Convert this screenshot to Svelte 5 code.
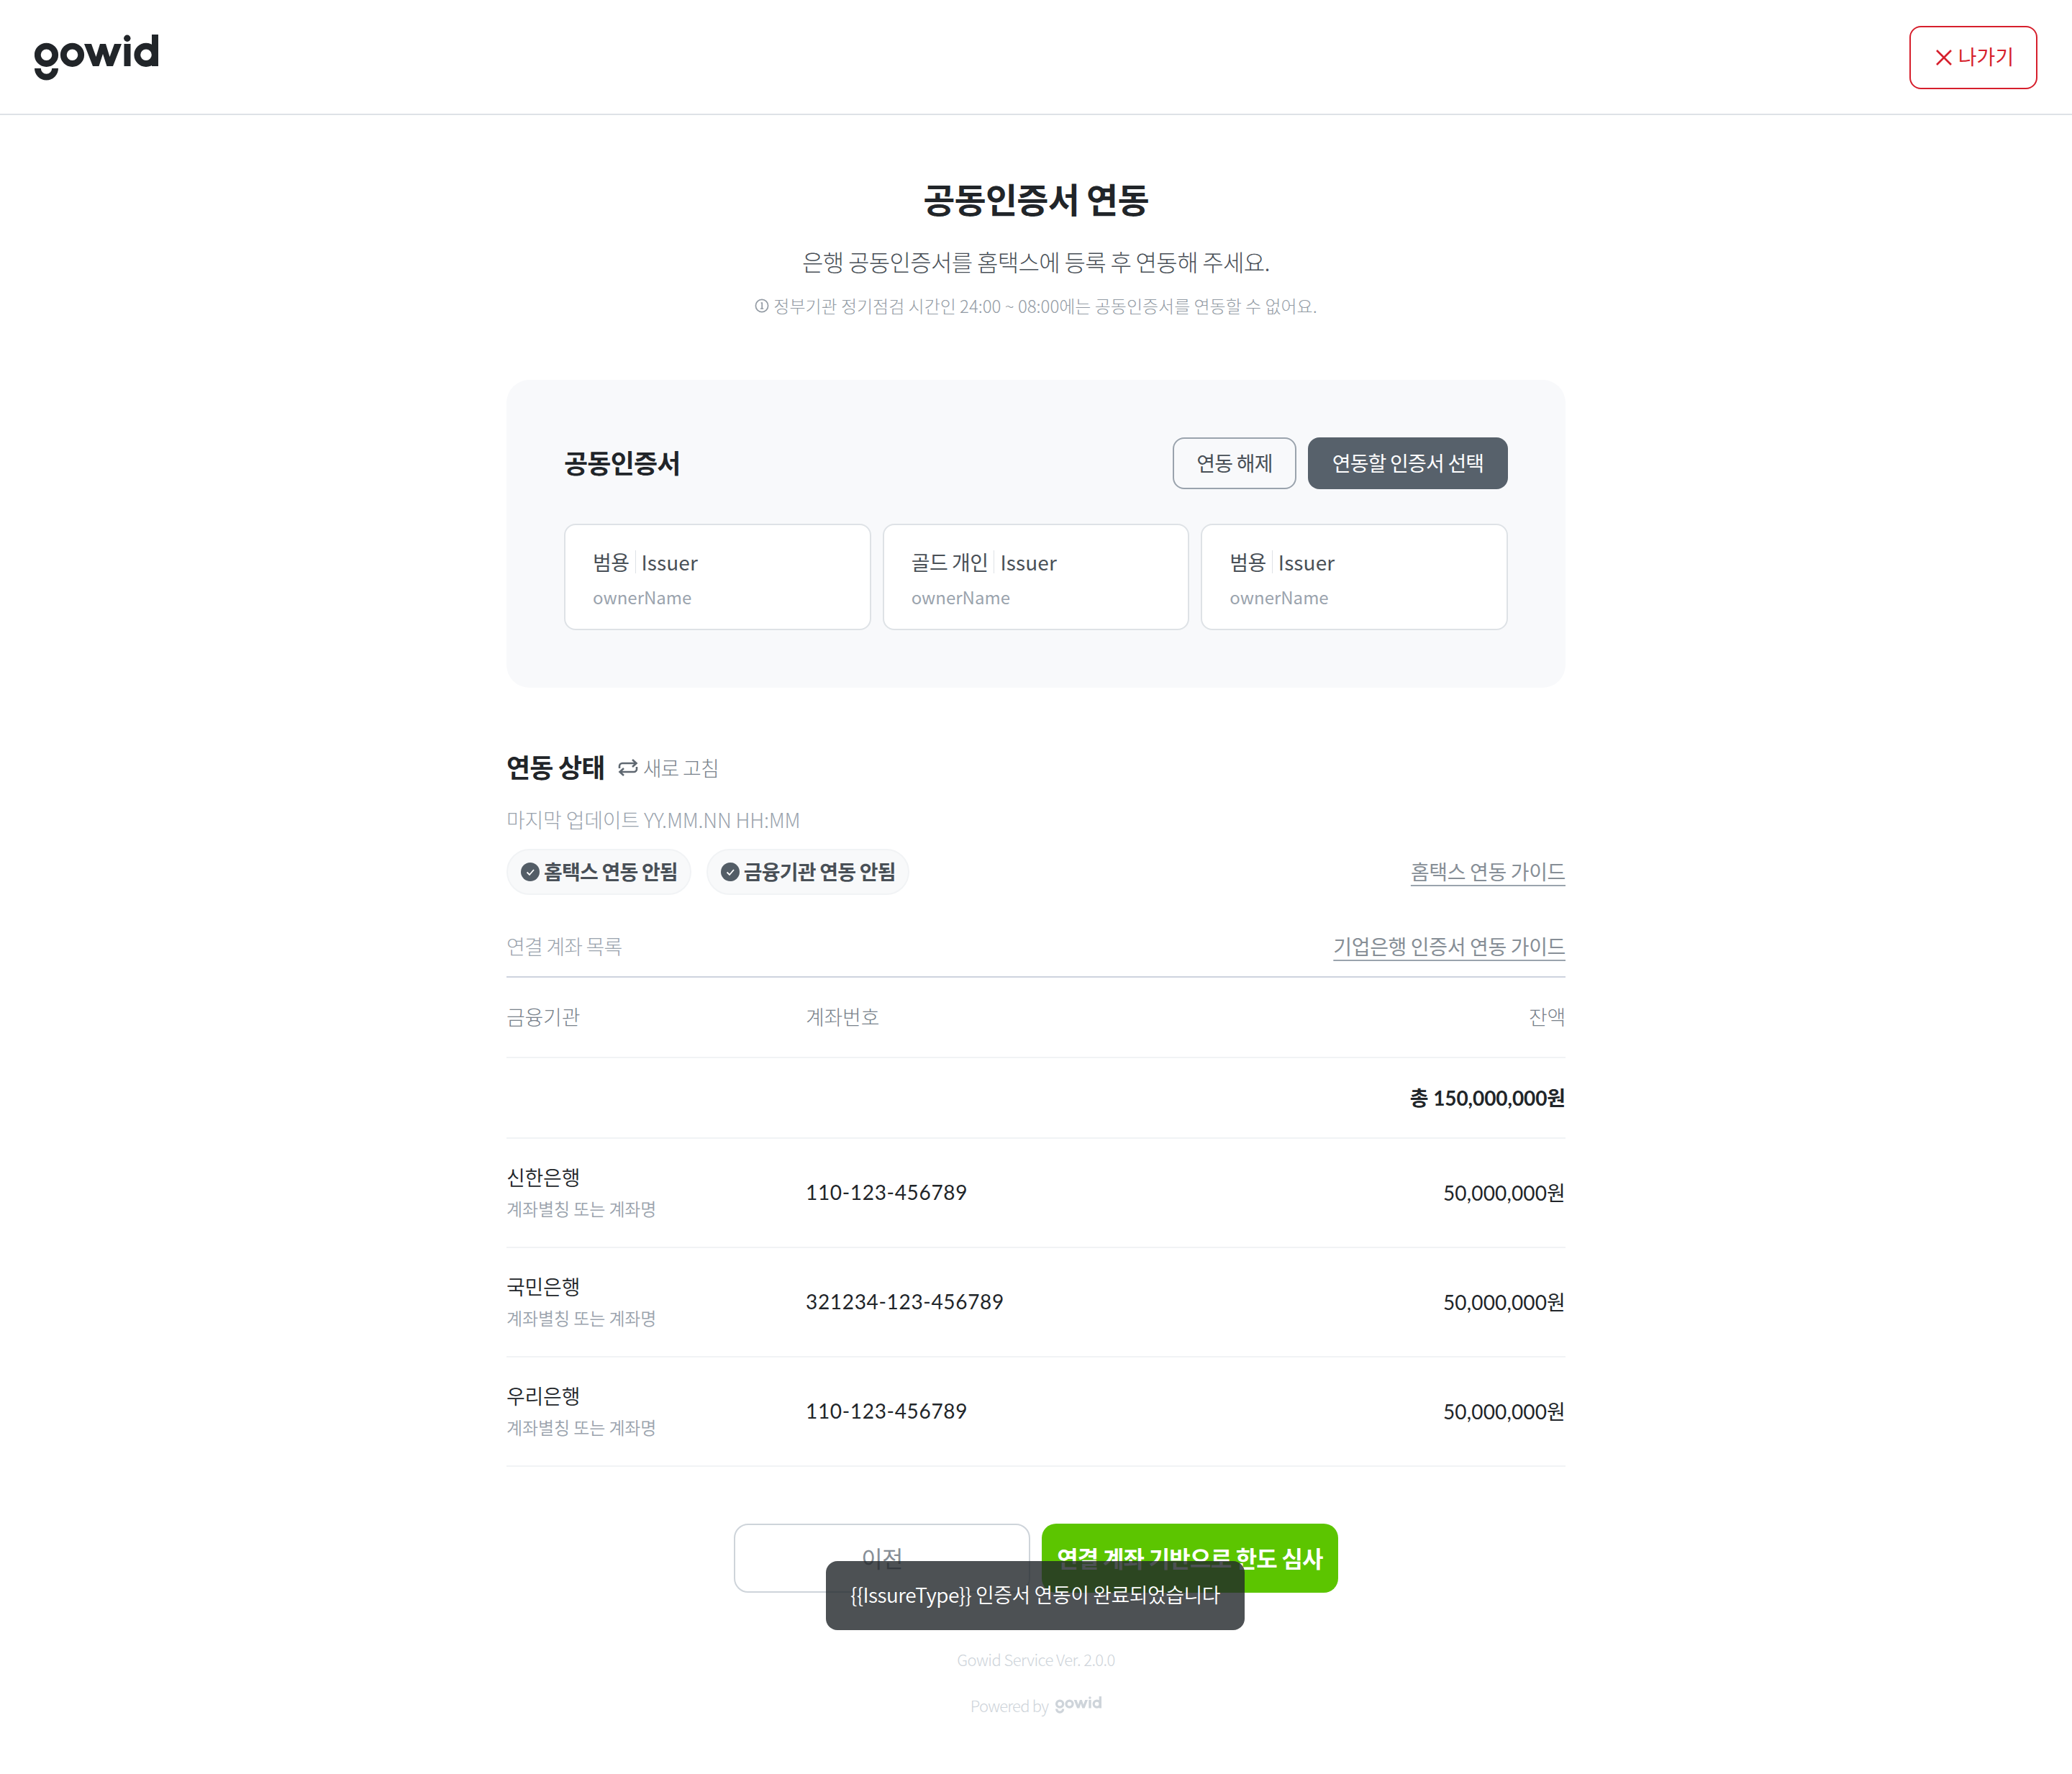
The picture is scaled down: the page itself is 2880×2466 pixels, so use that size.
<script>
  const certs = [
    { type: '범용', issuer: 'Issuer', owner: 'ownerName' },
    { type: '골드 개인', issuer: 'Issuer', owner: 'ownerName' },
    { type: '범용', issuer: 'Issuer', owner: 'ownerName' }
  ];
  const accounts = [
    { bank: '신한은행', alias: '계좌별칭 또는 계좌명', no: '110-123-456789', amount: '50,000,000원' },
    { bank: '국민은행', alias: '계좌별칭 또는 계좌명', no: '321234-123-456789', amount: '50,000,000원' },
    { bank: '우리은행', alias: '계좌별칭 또는 계좌명', no: '110-123-456789', amount: '50,000,000원' }
  ];
  const chips = ['홈택스 연동 안됨', '금융기관 연동 안됨'];
</script>

{#snippet logo(cls)}
  <svg class={cls} viewBox="0 0 172 64" aria-label="gowid">
    <g fill="none" stroke="currentColor" stroke-width="8.8">
      <circle cx="16.5" cy="28.3" r="12.2" />
      <circle cx="52.5" cy="28.3" r="12.2" />
      <circle cx="155" cy="28.3" r="12.2" />
      <path d="M4.4 47 a12.1 12.1 0 0 0 24.2 0" />
    </g>
    <polygon fill="currentColor" points="69,13 79,13 85.5,31 91,13 99,13 104.5,31 111,13 121,13 109,44 100.5,44 95,27 89.5,44 81,44" />
    <rect x="124.5" y="13" width="9" height="31" fill="currentColor" />
    <circle cx="128.8" cy="5.3" r="4.7" fill="currentColor" />
    <rect x="163" y="0" width="9" height="44" fill="currentColor" />
  </svg>
{/snippet}

<div class="page">
  <header class="topbar">
    {@render logo('logo')}
    <button class="exit">
      <svg viewBox="0 0 24 24" width="24" height="24" fill="none" stroke="currentColor" stroke-width="2.6">
        <path d="M2 2 L22 22 M22 2 L2 22" />
      </svg>
      <span>나가기</span>
    </button>
  </header>

  <main class="main">
    <h1>공동인증서 연동</h1>
    <p class="sub">은행 공동인증서를 홈택스에 등록 후 연동해 주세요.</p>
    <p class="note">
      <svg viewBox="0 0 20 20" width="20" height="20" fill="none" stroke="currentColor" stroke-width="1.7">
        <circle cx="10" cy="10" r="8.6" />
        <path d="M8.6 6h1.6v8 M8 14h4.2" />
      </svg>
      정부기관 정기점검 시간인 24:00 ~ 08:00에는 공동인증서를 연동할 수 없어요.
    </p>

    <section class="panel">
      <div class="panel-head">
        <h2>공동인증서</h2>
        <div class="panel-btns">
          <button class="btn-line">연동 해제</button>
          <button class="btn-dark">연동할 인증서 선택</button>
        </div>
      </div>
      <div class="certs">
        {#each certs as c}
          <div class="cert">
            <div class="cert-top"><span class="cert-type">{c.type}</span><span class="cert-issuer">{c.issuer}</span></div>
            <div class="cert-owner">{c.owner}</div>
          </div>
        {/each}
      </div>
    </section>

    <div class="status-title">
      <h2>연동 상태</h2>
      <span class="refresh">
        <svg viewBox="0 0 28 24" width="28" height="24" fill="none" stroke="#5f6871" stroke-width="2.6">
          <path d="M2 13 V10 a4 4 0 0 1 4-4 H25 M20 1 L25.5 6 L20 11" />
          <path d="M26 11 V14 a4 4 0 0 1-4 4 H3 M8 13 L2.5 18 L8 23" />
        </svg>
        새로 고침
      </span>
    </div>
    <p class="updated">마지막 업데이트 YY.MM.NN HH:MM</p>

    <div class="chip-row">
      <div class="chips">
        {#each chips as chip}
          <span class="chip">
            <svg viewBox="0 0 26 26" width="26" height="26">
              <circle cx="13" cy="13" r="13" fill="#535d66" />
              <path d="M8.5 13.5 L12 17 L18 10" fill="none" stroke="#fff" stroke-width="1.8" />
            </svg>
            {chip}
          </span>
        {/each}
      </div>
      <a class="guide" href="#hometax">홈택스 연동 가이드</a>
    </div>

    <div class="list-head">
      <span>연결 계좌 목록</span>
      <a class="guide" href="#ibk">기업은행 인증서 연동 가이드</a>
    </div>

    <div class="row head">
      <span>금융기관</span><span>계좌번호</span><span class="right">잔액</span>
    </div>
    <div class="row total">
      <span></span><span></span><span class="right">총 150,000,000원</span>
    </div>
    {#each accounts as a}
      <div class="row account">
        <div>
          <div class="bank">{a.bank}</div>
          <div class="alias">{a.alias}</div>
        </div>
        <span class="num">{a.no}</span>
        <span class="amount right">{a.amount}</span>
      </div>
    {/each}

    <div class="actions">
      <button class="prev">이전</button>
      <button class="next">연결 계좌 기반으로 한도 심사</button>
    </div>

    <p class="version">Gowid Service Ver. <span>2.0.0</span></p>
    <p class="powered">Powered by {@render logo('logo-small')}</p>
  </main>

  <div class="toast">{'{{IssureType}}'} 인증서 연동이 완료되었습니다</div>
</div>

<style>
  :global(body) {
    margin: 0;
    background: #fff;
  }
  .page {
    position: relative;
    height: 2466px;
    overflow: hidden;
    font-family: "Noto Sans CJK KR", "Noto Sans", sans-serif;
    color: #212529;
    letter-spacing: -0.8px;
  }
  button {
    font-family: inherit;
    letter-spacing: inherit;
    cursor: pointer;
  }
  h1, h2, p {
    margin: 0;
  }
  .topbar {
    height: 158px;
    border-bottom: 2px solid #dee2e6;
    display: flex;
    align-items: center;
    justify-content: space-between;
    padding: 0 48px;
  }
  .logo {
    width: 172px;
    height: 64px;
    color: #212529;
    margin-top: 2px;
  }
  .exit {
    width: 178px;
    height: 88px;
    margin-top: 2px;
    border: 2px solid #d61f2c;
    border-radius: 16px;
    background: #fff;
    color: #d61f2c;
    font-size: 28px;
    letter-spacing: 0;
    display: flex;
    align-items: center;
    justify-content: center;
    gap: 8px;
    padding: 0 0 4px 3px;
  }
  .exit svg {
    margin-top: 4px;
  }
  .main {
    width: 1472px;
    margin: 0 auto;
  }
  h1 {
    margin-top: 79px;
    font-size: 48px;
    line-height: 72px;
    font-weight: 700;
    text-align: center;
  }
  .sub {
    margin-top: 28px;
    font-size: 32px;
    line-height: 48px;
    font-weight: 300;
    color: #495057;
    letter-spacing: -0.67px;
    text-align: center;
  }
  .note {
    margin-top: 20px;
    font-size: 24px;
    line-height: 36px;
    font-weight: 300;
    color: #939ba4;
    letter-spacing: 0;
    display: flex;
    align-items: center;
    justify-content: center;
    gap: 6px;
  }
  .panel {
    margin-top: 85px;
    padding: 80px;
    background: #f8f9fb;
    border-radius: 32px;
  }
  .panel-head {
    display: flex;
    align-items: center;
    justify-content: space-between;
  }
  h2 {
    font-size: 36px;
    line-height: 48px;
    padding-bottom: 4px;
    font-weight: 700;
  }
  .panel-head h2 {
    padding-bottom: 5px;
  }
  .panel-btns {
    display: flex;
    gap: 16px;
  }
  .btn-line, .btn-dark {
    height: 72px;
    border-radius: 16px;
    font-size: 28px;
    padding: 0 0 2px;
  }
  .btn-line {
    width: 172px;
    border: 2px solid #9aa3ad;
    background: #f8f9fb;
    color: #495057;
  }
  .btn-dark {
    width: 278px;
    border: 0;
    background: #57616b;
    color: #fff;
  }
  .certs {
    margin-top: 48px;
    display: grid;
    grid-template-columns: repeat(3, 1fr);
    gap: 16px;
  }
  .cert {
    height: 148px;
    box-sizing: border-box;
    padding: 4px 38px 0;
    background: #fff;
    border: 2px solid #dee2e6;
    border-radius: 16px;
    display: flex;
    flex-direction: column;
    justify-content: center;
  }
  .cert-top {
    display: flex;
    align-items: center;
    font-size: 28px;
    line-height: 40px;
    color: #495057;
    letter-spacing: -0.5px;
  }
  .cert-type {
    padding-right: 8px;
    margin-right: 8px;
    border-right: 1px solid #dee2e6;
    line-height: 32px;
  }
  .cert-issuer {
    letter-spacing: 0.1px;
  }
  .cert-owner {
    margin-top: 11px;
    font-size: 24px;
    line-height: 36px;
    color: #9aa3ad;
    letter-spacing: 0;
  }
  .status-title {
    margin-top: 85px;
    display: flex;
    align-items: center;
    gap: 18px;
  }
  .refresh {
    display: flex;
    align-items: center;
    gap: 7px;
    font-size: 28px;
    font-weight: 300;
    color: #79828b;
  }
  .updated {
    margin-top: 26px;
    font-size: 28px;
    line-height: 40px;
    font-weight: 300;
    color: #9aa3ad;
    letter-spacing: -0.2px;
  }
  .chip-row {
    margin-top: 21px;
    display: flex;
    align-items: center;
    justify-content: space-between;
  }
  .chip-row .guide {
    margin-bottom: 2px;
  }
  .chips {
    display: flex;
    gap: 21px;
  }
  .chip {
    height: 64px;
    box-sizing: border-box;
    padding: 0 17px 2px 18px;
    display: flex;
    align-items: center;
    gap: 6px;
    background: #f8f9fa;
    border: 2px solid #f1f3f5;
    border-radius: 32px;
    font-size: 28px;
    font-weight: 700;
    color: #495057;
  }
  .chip svg {
    margin-top: 2px;
  }
  .guide {
    font-size: 28px;
    line-height: 40px;
    font-weight: 400;
    color: #868e96;
    letter-spacing: -0.35px;
    text-decoration: underline;
    text-decoration-color: #9aa3ad;
    text-decoration-thickness: 2px;
    text-underline-offset: 7px;
  }
  .list-head {
    margin-top: 51px;
    padding-bottom: 22px;
    border-bottom: 2px solid #ced3de;
    display: flex;
    align-items: center;
    justify-content: space-between;
    font-size: 28px;
    line-height: 40px;
    font-weight: 300;
    color: #9aa3ad;
  }
  .row {
    display: grid;
    grid-template-columns: 416px 1fr auto;
    align-items: center;
    border-bottom: 2px solid #f1f3f5;
    font-size: 28px;
    letter-spacing: -0.2px;
    box-sizing: border-box;
    padding-bottom: 3px;
  }
  .head {
    height: 112px;
    font-weight: 300;
    color: #79828b;
  }
  .total {
    height: 112px;
    font-family: Lato, "Noto Sans CJK KR", sans-serif;
    font-weight: 700;
    font-size: 28px;
    letter-spacing: -0.1px;
  }
  .account {
    height: 152px;
  }
  .right {
    text-align: right;
  }
  .bank {
    line-height: 40px;
    font-weight: 350;
  }
  .alias {
    margin-top: 6px;
    font-size: 24px;
    line-height: 36px;
    font-weight: 350;
    color: #9aa3ad;
    letter-spacing: -0.1px;
  }
  .num, .amount {
    font-family: Lato, "Noto Sans CJK KR", sans-serif;
    font-size: 28px;
  }
  .num {
    letter-spacing: 0.68px;
  }
  .amount {
    letter-spacing: 0.15px;
  }
  .actions {
    margin-top: 79px;
    display: flex;
    justify-content: center;
    gap: 16px;
  }
  .prev, .next {
    width: 412px;
    height: 96px;
    border-radius: 20px;
    font-size: 32px;
    padding: 0 0 2px;
  }
  .prev {
    background: #fff;
    border: 2px solid #ced4da;
    color: #868e96;
  }
  .next {
    background: #5cc500;
    border: 0;
    color: #fff;
    font-weight: 700;
  }
  .version {
    margin-top: 74px;
    font-size: 22px;
    line-height: 36px;
    font-weight: 300;
    color: #ced4da;
    letter-spacing: -0.55px;
    text-align: center;
  }
  .powered {
    margin-top: 28px;
    display: flex;
    align-items: center;
    justify-content: center;
    gap: 10px;
    font-size: 22px;
    line-height: 36px;
    font-weight: 300;
    color: #ced4da;
  }
  .logo-small {
    width: 64px;
    height: 24px;
    color: #ced4da;
  }
  .toast {
    position: absolute;
    left: 1148px;
    top: 2170px;
    width: 582px;
    height: 96px;
    box-sizing: border-box;
    padding-bottom: 4px;
    display: flex;
    align-items: center;
    justify-content: center;
    background: rgba(33, 37, 41, 0.8);
    border-radius: 16px;
    color: #fff;
    font-size: 28px;
    letter-spacing: -0.5px;
    font-weight: 350;
  }
</style>
